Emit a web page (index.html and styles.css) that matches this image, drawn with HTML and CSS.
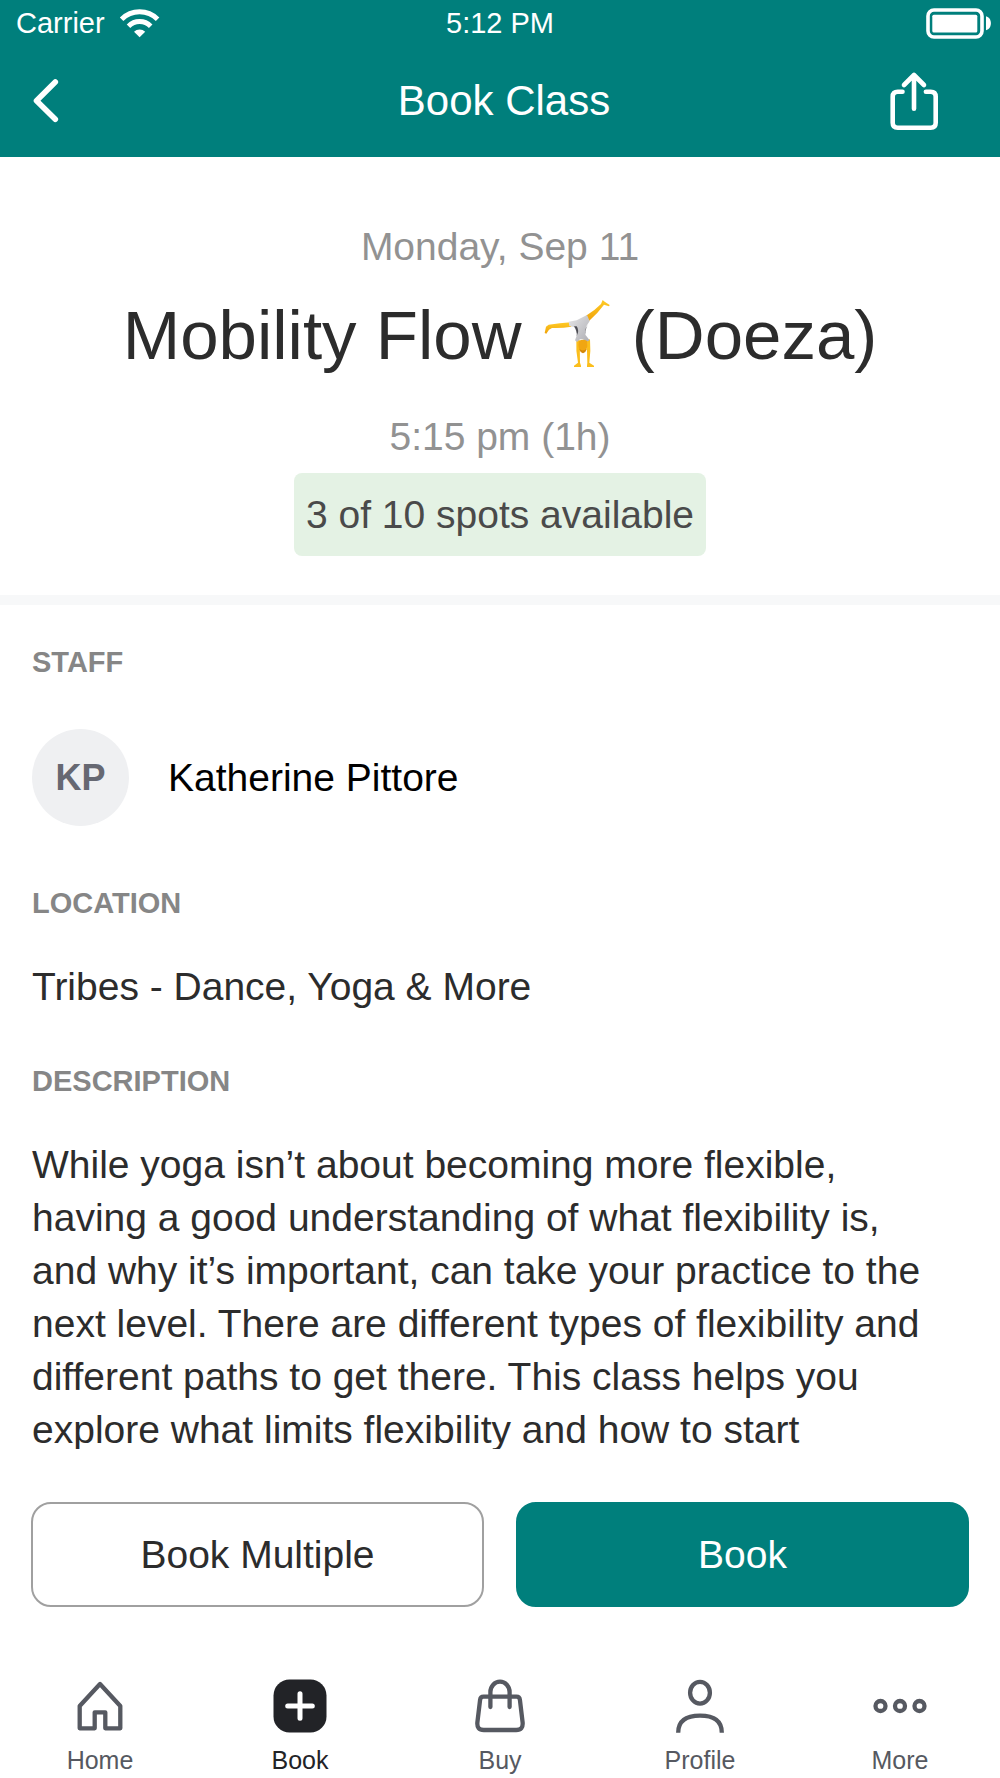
FILE: index.html
```html
<!DOCTYPE html>
<html lang="en">
<head>
    <meta charset="UTF-8">
    <meta name="viewport" content="width=device-width, initial-scale=1.0">
    <title>Book Class</title>
    <link rel="stylesheet" href="styles.css">
</head>
<body>
    <header class="header">
        <div class="status-bar">
            <div class="carrier">
                <span>Carrier</span>
                <svg width="42" height="30" viewBox="0 0 42 30" fill="none" stroke="currentColor" stroke-width="5" aria-hidden="true">
                    <path d="M2.6 11.3a25.5 25.5 0 0 1 36 0M9.5 18.2a15.7 15.7 0 0 1 22.2 0"/>
                    <path d="M20.6 29.3L15 23.7a8 8 0 0 1 11.2 0z" fill="currentColor" stroke="none"/>
                </svg>
            </div>
            <span class="time">5:12 PM</span>
            <svg class="battery" width="66" height="31" viewBox="0 0 66 31" aria-hidden="true">
                <rect x="2" y="2" width="54" height="27" rx="6" fill="none" stroke="currentColor" stroke-width="3.6"/>
                <rect x="6.3" y="6.7" width="45" height="17.7" rx="1.5" fill="currentColor"/>
                <path d="M60 8.3c6.5 1.5 6.5 12.5 0 14z" fill="currentColor"/>
            </svg>
        </div>
        <div class="nav-bar">
            <button class="icon-btn back-btn" aria-label="Back">
                <svg width="28" height="46" viewBox="0 0 28 46" fill="none" stroke="currentColor" stroke-width="5.6" stroke-linecap="round" stroke-linejoin="round">
                    <path d="M23.3 4L4.5 22.7l18.8 18.6"/>
                </svg>
            </button>
            <h1>Book Class</h1>
            <button class="icon-btn share-btn" aria-label="Share">
                <svg width="52" height="60" viewBox="0 0 52 60" fill="none" stroke="currentColor" stroke-width="4.6" stroke-linecap="round" stroke-linejoin="round">
                    <path d="M26 37.8V5M16 14L26 4l10 10"/>
                    <path d="M14.5 20.7H9.7q-5 0-5 5v26q0 5 5 5h33q5 0 5-5v-26q0-5-5-5h-4.8"/>
                </svg>
            </button>
        </div>
    </header>

    <main class="content">
        <section class="summary">
            <p class="meta">Monday, Sep 11</p>
            <h2>Mobility Flow
                <svg class="emoji" viewBox="33 24 216 216" role="img" aria-label="Cartwheel">
                    <defs>
                        <linearGradient id="skin" x1="0" y1="0" x2="0" y2="1">
                            <stop offset="0" stop-color="#ffcb26"/>
                            <stop offset="1" stop-color="#f0a30a"/>
                        </linearGradient>
                        <linearGradient id="suit" x1="0" y1="0" x2="1" y2="1">
                            <stop offset="0" stop-color="#e6e6e8"/>
                            <stop offset="1" stop-color="#aeaeb3"/>
                        </linearGradient>
                    </defs>
                    <path d="M168 77Q194 62 213 42L218 30l6 5 15 10-2 4-15-5Q203 70 177 93z" fill="url(#skin)"/>
                    <path d="M122 97Q90 99 56 104l-8 6-4 19 5 2 8-12 9-5q32 1 58-4z" fill="url(#skin)"/>
                    <!-- arms and hands -->
                    <path d="M139 148q-2 34 5 70l-12 9v4h21v-4l-3-9q-2-30 2-66z" fill="#fbbe1c"/>
                    <path d="M180 148q3 34-2 70l14 9v4h-21v-4l1-9q1-30-5-66z" fill="#fbbe1c"/>
                    <path d="M116 95l24-4 31-16 8 18-11 17-2 24 13 17-11 5-9-8h-9l-9 8-6-5 7-19-9-21-15-3z" fill="url(#suit)"/>
                    <path d="M132 109q10 14 8 30 9-18 0-30zM173 105q-12 16-4 34-6-16 4-34z" fill="#4d4d54"/>
                    <path d="M147 153q12-7 24 0 3 16-2 26l-10 10-10-9q-6-12-2-27z" fill="#f0a612"/>
                    <path d="M148 177q11 9 22-1l-4 10-7 4-7-4z" fill="#d48708"/>
                </svg>
                (Doeza)</h2>
            <p class="meta">5:15 pm (1h)</p>
            <p class="spots">3 of 10 spots available</p>
        </section>

        <section class="details">
            <h3>Staff</h3>
            <div class="staff">
                <div class="avatar">KP</div>
                <span>Katherine Pittore</span>
            </div>

            <h3>Location</h3>
            <p class="location">Tribes - Dance, Yoga &amp; More</p>

            <h3>Description</h3>
            <p class="description">While yoga isn’t about becoming more flexible, having a good understanding of what flexibility is, and why it’s important, can take your practice to the next level. There are different types of flexibility and different paths to get there. This class helps you explore what limits flexibility and how to start</p>
        </section>
    </main>

    <div class="actions">
        <button class="btn">Book Multiple</button>
        <button class="btn btn-primary">Book</button>
    </div>

    <nav class="tabs">
        <a href="#home" class="tab">
            <svg viewBox="0 0 54 54" fill="none" stroke="currentColor" stroke-width="4.3" stroke-linejoin="round" aria-hidden="true">
                <path d="M27 5L6.7 27v22.3h15v-16h10.6v16h15V27z"/>
            </svg>
            Home
        </a>
        <a href="#book" class="tab active">
            <svg viewBox="0 0 54 54" aria-hidden="true">
                <rect x="0.5" y="0.5" width="53" height="53" rx="16" fill="#222327"/>
                <path d="M27 14.7v24.6M14.7 27h24.6" stroke="#fff" stroke-width="5" stroke-linecap="round"/>
            </svg>
            Book
        </a>
        <a href="#buy" class="tab">
            <svg viewBox="0 0 54 54" fill="none" stroke="currentColor" stroke-width="4.3" stroke-linecap="round" aria-hidden="true">
                <path d="M10.5 17.7h33q3 0 3.4 3l2.7 22.5q.8 7.8-6.400 7.8H10.8q-7.200 0-6.400-7.8l2.7-22.5q.4-3 3.400-3z"/>
                <path d="M17.4 28V13a9.600 10.300 0 0 1 19.200 0v15"/>
            </svg>
            Buy
        </a>
        <a href="#profile" class="tab">
            <svg viewBox="0 0 54 54" fill="none" stroke="currentColor" stroke-width="4.3" aria-hidden="true">
                <ellipse cx="27" cy="13.7" rx="9.9" ry="10.9"/>
                <path d="M5.2 53.7C5.2 41 14 36.7 27 36.7S48.8 41 48.8 53.7"/>
            </svg>
            Profile
        </a>
        <a href="#more" class="tab">
            <svg viewBox="0 0 54 54" fill="none" stroke="currentColor" stroke-width="4.3" aria-hidden="true">
                <circle cx="7.5" cy="27" r="5"/>
                <circle cx="27" cy="27" r="5"/>
                <circle cx="46.5" cy="27" r="5"/>
            </svg>
            More
        </a>
    </nav>
</body>
</html>
```

FILE: styles.css
```css
* {
    box-sizing: border-box;
}
body {
    font-family: 'Liberation Sans', Arial, Helvetica, sans-serif;
    font-size: 39px;
    line-height: 46px;
    margin: 0;
    height: 100vh;
    display: flex;
    flex-direction: column;
    background: #fff;
    color: #2c2c2c;
}
h1, h2, h3, p {
    margin: 0;
    font-weight: normal;
}
svg {
    display: block;
}
button {
    font: inherit;
    cursor: pointer;
}

/* Header */
.header {
    flex: none;
    background: #007f7c;
    color: white;
}
.status-bar {
    display: grid;
    grid-template-columns: 1fr auto 1fr;
    align-items: center;
    height: 45px;
    padding: 0 8px;
    font-size: 29px;
}
.carrier {
    display: flex;
    align-items: center;
    gap: 14px;
    padding-left: 8px;
}
.battery {
    justify-self: end;
}
.nav-bar {
    display: grid;
    grid-template-columns: 1fr auto 1fr;
    align-items: center;
    height: 112px;
    padding: 0 24px 0 32px;
}
.nav-bar h1 {
    font-size: 42px;
}
.icon-btn {
    padding: 0;
    border: none;
    background: none;
    color: inherit;
}
.back-btn {
    justify-self: start;
}
.share-btn {
    justify-self: end;
    margin-right: 36px;
}

/* Class info */
.content {
    flex: 1;
    min-height: 0;
    overflow-y: auto;
    scrollbar-width: none;
}
.summary {
    display: flex;
    flex-direction: column;
    align-items: center;
    padding: 67px 32px 39px;
    border-bottom: 10px solid #f7f8f9;
    text-align: center;
}
.summary h2 {
    margin: 26px 0 38px;
    font-size: 69px;
    line-height: 80px;
}
.emoji {
    display: inline-block;
    width: 72px;
    height: 72px;
    vertical-align: -11px;
}
.meta {
    color: #929292;
}
.spots {
    margin-top: 13px;
    padding: 18px 12px;
    border-radius: 8px;
    background: #e4f2e4;
    color: #4a4a4a;
    line-height: 47px;
}
.details {
    padding: 40px 64px 0 32px;
}
.details h3 {
    color: #868686;
    font-size: 29px;
    font-weight: bold;
    line-height: 34px;
    text-transform: uppercase;
}
.staff {
    display: flex;
    align-items: center;
    gap: 39px;
    margin: 50px 0 60px;
    color: #000;
}
.avatar {
    display: flex;
    align-items: center;
    justify-content: center;
    width: 97px;
    height: 97px;
    border-radius: 50%;
    background: #eff0f2;
    color: #666872;
    font-size: 36px;
    font-weight: bold;
}
.location {
    margin: 44px 0 54px;
}
.description {
    margin-top: 40px;
    line-height: 53px;
}

/* Footer */
.actions {
    flex: none;
    display: grid;
    grid-template-columns: 1fr 1fr;
    gap: 32px;
    padding: 53px 31px 0;
}
.btn {
    height: 105px;
    padding: 0;
    border: 2px solid #a0a0a0;
    border-radius: 20px;
    background: white;
    color: #2c2c2c;
}
.btn-primary {
    border-color: #007f7c;
    background: #007f7c;
    color: white;
}
.tabs {
    flex: none;
    display: grid;
    grid-template-columns: repeat(5, 1fr);
    padding: 72px 0 3px;
}
.tab {
    display: flex;
    flex-direction: column;
    align-items: center;
    gap: 12px;
    color: #565961;
    font-size: 25px;
    line-height: 30px;
    text-decoration: none;
}
.tab svg {
    width: 54px;
    height: 54px;
}
.tab.active {
    color: #222327;
}
```
